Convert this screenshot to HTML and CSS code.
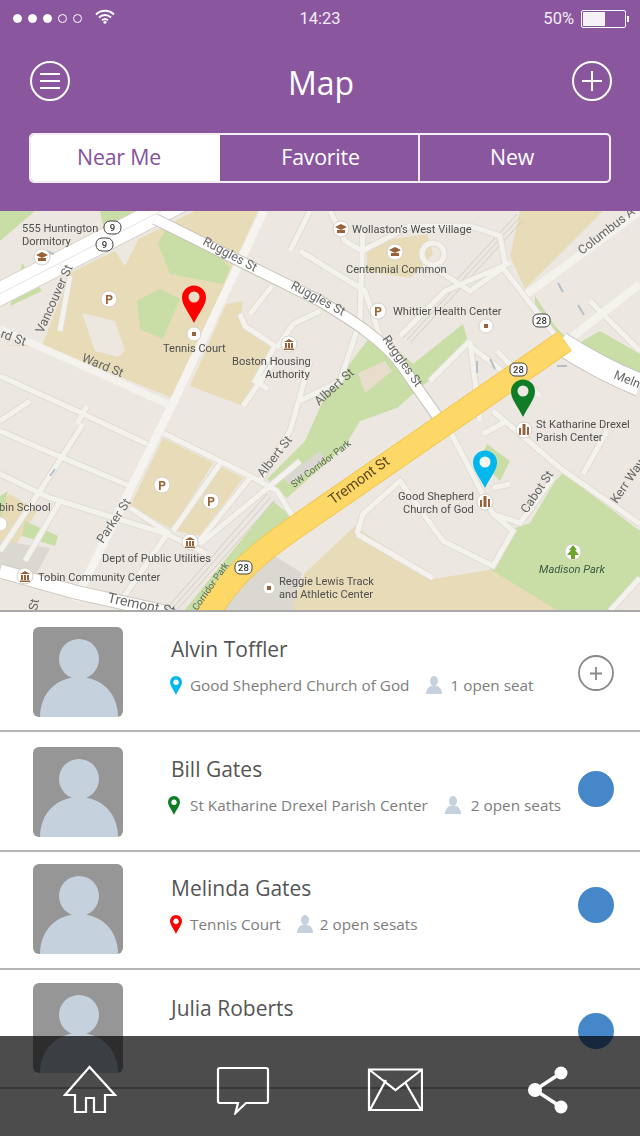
FILE: index.html
```html
<!DOCTYPE html>
<html lang="en">
<head>
<meta charset="utf-8">
<title>Map</title>
<link rel="stylesheet" href="styles.css">
</head>
<body>
<div class="phone">
  <header class="top">
    <div class="status">
      <div class="signal"><i class="on"></i><i class="on"></i><i class="on"></i><i></i><i></i>
        <svg class="wifi" viewBox="0 0 20 15" width="20" height="15"><path d="M1 5.500C6 .5 14 .5 19 5.500M4 8.500C7.500 5 12.500 5 16 8.500M7 11.300C8.800 9.800 11.200 9.800 13 11.300"/><circle cx="10" cy="13.300" r="1.500"/></svg>
      </div>
      <div class="clock">14:23</div>
      <div class="power"><span>50%</span><div class="battery"><b></b></div><em></em></div>
    </div>
    <div class="titlebar">
      <button class="round"><svg viewBox="0 0 40 40" width="40" height="40"><circle cx="20" cy="20" r="19"/><path d="M10 13H30M10 20H30M10 27H30"/></svg></button>
      <h1>Map</h1>
      <button class="round"><svg viewBox="0 0 40 40" width="40" height="40"><circle cx="20" cy="20" r="19"/><path d="M20 10V30M10 20H30"/></svg></button>
    </div>
    <nav class="tabs">
      <a class="tab active">Near Me</a>
      <a class="tab">Favorite</a>
      <a class="tab">New</a>
    </nav>
  </header>

  <svg class="map" viewBox="0 210 640 401" width="640" height="401">
    <defs>
      <g id="streets" fill="none">
        <path d="M0 375L77 410L147 443M0 430L63 457L130 485M0 473L50 497L167 533L207 553M83 423L40 490M87 405L77 423M220 463L173 530M250 477L197 543M167 533L123 597"/>
        <path d="M163 432L250 475L277 490L297 522M130 507L170 533M40 490L0 550M60 500L25 560"/>
        <path d="M357 533L363 513L400 480L443 540L493 565L513 530L493 513L450 430M493 410L560 467L640 523M583 473L607 430M483 433L507 420M493 487L510 483M493 513L520 522L553 477M357 533L433 577M610 610L640 577"/>
        <path d="M503 267L557 337M360 320L363 227M330 210L345 240L362 250M362 250L410 225L470 225L500 235L505 262M431 265L470 290L503 267M400 335L445 290L510 262M422 253a11 11 0 1 0 22 0a11 11 0 1 0 -22 0"/>
        <path d="M430 380L470 340M470 345L505 372M470 340L480 420M497 350L540 395M590 300L640 350"/>
        <path d="M240 313L245 325L275 345L255 380L268 388M272 285L250 313M320 310L293 323L277 347M243 405L275 360M300 400L340 380L360 320M260 480L290 430L310 360M310 210L290 250M300 250L365 290L380 335"/>
        <path d="M70 275L60 330M0 420L30 400M200 543L300 460"/>
      </g>
    </defs>

    <rect x="0" y="210" width="640" height="401" class="ground"/>
    <polygon class="tan" points="0,345 42,345 70,272 195,210 258,210 172,397 40,343"/>
    <polygon class="tan" points="190,385 226,303 243,300 240,322 272,345 243,405"/>
    <polygon class="tan" points="163,437 213,462 172,528 130,505"/>
    <polygon class="tan" points="220,465 243,477 200,535 177,530"/>
    <polygon class="tan" points="520,210 603,210 525,288 510,255"/>
    <polygon class="tan" points="367,242 427,233 433,253 410,277 367,270"/>
    <polygon class="tan" points="355,525 433,578 495,568 560,611 290,611 305,572"/>
    <polygon class="tan" points="10,493 37,510 15,545 0,540 0,500"/>
    <polygon class="gray" points="258,560 205,611 292,611 302,572 270,552"/>
    <polygon class="gray" points="0,540 50,547 37,572 0,568"/>
    <polygon class="pale" points="82,312 115,320 125,350 118,356 95,350"/>
    <polygon class="pale" points="115,214 145,225 125,265 115,250"/>

    <polygon class="green" points="0,210 35,210 0,240"/>
    <polygon class="green" points="100,210 135,210 105,235"/>
    <polygon class="green" points="158,243 170,220 205,240 230,267 223,283 170,273"/>
    <polygon class="green" points="137,300 160,288 180,298 163,338 140,328"/>
    <polygon class="green" points="22,262 42,290 10,305 18,280"/>
    <polygon class="green" points="367,340 383,337 413,363 463,323 467,337 453,360 420,387 397,407 360,420 345,445 287,497 267,478 305,440 325,395"/>
    <polygon class="green" points="183,611 230,553 273,500 293,517 253,550 200,611"/>
    <polygon class="green" points="577,343 600,330 640,353 640,372 620,367"/>
    <polygon class="green" points="535,295 555,325 565,335 560,340 535,310"/>
    <polygon class="green" points="487,443 510,460 500,480 480,460"/>
    <polygon class="green" points="490,568 515,527 530,522 555,480 563,472 640,530 640,580 610,611 560,611"/>
    <polygon class="green" points="25,520 58,535 55,545 22,535"/>
    <polygon class="green" points="0,495 8,490 0,520"/>
    <polygon class="clay" points="358,372 385,360 392,370 365,392"/>
    <polygon class="gray" points="283,477 320,450 325,458 290,484"/>

    <g class="rail">
      <path d="M403 337L517 213M407 339L520 216M411 341L523 219M167 607L267 493M171 609L271 496M175 611L275 499"/>
    </g>

    <use href="#streets" class="casing"/>
    <use href="#streets" class="street"/>

    <path class="main casing-main" d="M-20 303L200 190"/>
    <path class="main" d="M-20 303L200 190"/>
    <path class="main-mid" d="M-20 303L200 190"/>
    <path class="parker" d="M264 210L170 408L75 600"/>
    <path class="ward" d="M0 328L172 405"/>
    <path class="columbus" d="M527 293L640 210M567 340L640 283"/>
    <path class="ruggles-case" d="M155 218L320 300C350 318 385 340 402 365L442 422"/>
    <path class="ruggles" d="M155 218L320 300C350 318 385 340 402 365L442 422"/>
    <path class="tremont-w-case" d="M0 570L75 591L165 611"/>
    <path class="tremont-w" d="M0 570L75 591L165 611"/>
    <path class="melnea-case" d="M560 342C585 358 610 372 640 384"/>
    <path class="melnea" d="M560 342C585 358 610 372 640 384"/>
    <path class="yellow-case" d="M205 620C222 585 250 558 290 530L565 340"/>
    <path class="yellow" d="M205 620C222 585 250 558 290 530L565 340"/>

    <g class="arrows">
      <path d="M558 282L563 291M578 304L584 314M477 360L477 372M490 358L495 368M557 365H567M54 253L44 249M50 475L55 468"/>
    </g>

    <g class="poi">
      <circle cx="42" cy="256" r="8"/><circle cx="109" cy="298" r="8"/><circle cx="194" cy="333" r="7"/><circle cx="289" cy="343" r="8"/>
      <circle cx="341" cy="228" r="8"/><circle cx="395" cy="251" r="8"/><circle cx="378" cy="310" r="8"/><circle cx="486" cy="325" r="7"/>
      <circle cx="524" cy="429" r="8"/><circle cx="485" cy="501" r="8"/><circle cx="573" cy="551" r="8"/>
      <circle cx="162" cy="484" r="8"/><circle cx="211" cy="500" r="8"/><circle cx="190" cy="541" r="8"/><circle cx="25" cy="575" r="8"/><circle cx="269" cy="587" r="6"/><circle cx="0" cy="523" r="7"/>
    </g>
    <g class="glyph">
      <text x="109" y="302.500">P</text><text x="378" y="314.500">P</text><text x="162" y="488.500">P</text><text x="211" y="504.500">P</text>
    </g>
    <g class="brown">
      <rect x="192" y="331" width="4" height="4"/><rect x="484" y="323" width="4" height="4"/><rect x="267" y="585" width="4" height="4"/>
      <path d="M36 254L42 251L48 254L42 257ZM38 257H46V260H38ZM335 226L341 223L347 226L341 229ZM337 229H345V232H337ZM389 249L395 246L401 249L395 252ZM391 252H399V255H391Z"/>
      <path d="M284 341L289 338L294 341ZM285 342H287V347H285ZM288 342H290V347H288ZM291 342H293V347H291ZM284 347.500H294V349H284ZM185 539L190 536L195 539ZM186 540H188V545H186ZM189 540H191V545H189ZM192 540H194V545H192ZM185 545.500H195V547H185ZM20 573L25 570L30 573ZM21 574H23V579H21ZM24 574H26V579H24ZM27 574H29V579H27ZM20 579.500H30V581H20Z"/>
      <path d="M519 427H521V434H519ZM522.500 423H525.500V434H522.500ZM527 426H529V434H527ZM480 499H482V506H480ZM483.500 495H486.500V506H483.500ZM488 498H490V506H488Z"/>
    </g>
    <path class="tree" d="M573 544L577 549H575L579 554H575V558H571V554H567L571 549H569Z"/>

    <g class="shield">
      <rect x="104" y="220" width="17" height="13" rx="6"/><rect x="96" y="237" width="17" height="13" rx="6"/>
      <rect x="533" y="313" width="17" height="13" rx="5"/><rect x="510" y="362" width="17" height="13" rx="5"/><rect x="235" y="560" width="17" height="13" rx="5"/>
    </g>
    <g class="shield-t">
      <text x="112.500" y="230">9</text><text x="104.500" y="247">9</text><text x="541.500" y="323">28</text><text x="518.500" y="372">28</text><text x="243.500" y="570">28</text>
    </g>

    <g class="lbl">
      <text x="22" y="231">555 Huntington</text><text x="22" y="244">Dormitory</text>
      <text x="163" y="351">Tennis Court</text>
      <text x="232" y="364">Boston Housing</text><text x="265" y="377">Authority</text>
      <text x="352" y="232">Wollaston's West Village</text>
      <text x="346" y="272">Centennial Common</text>
      <text x="393" y="314">Whittier Health Center</text>
      <text x="536" y="427">St Katharine Drexel</text><text x="536" y="440">Parish Center</text>
      <text x="398" y="499">Good Shepherd</text><text x="403" y="512">Church of God</text>
      <text x="-1" y="510">bin School</text>
      <text x="102" y="561">Dept of Public Utilities</text>
      <text x="38" y="580">Tobin Community Center</text>
      <text x="279" y="584">Reggie Lewis Track</text><text x="279" y="597">and Athletic Center</text>
      <text class="park" x="539" y="572">Madison Park</text>
    </g>
    <g class="road">
      <text transform="translate(43 333) rotate(-66)">Vancouver St</text>
      <text transform="translate(202 243) rotate(28)">Ruggles St</text>
      <text transform="translate(290 287) rotate(28)">Ruggles St</text>
      <text transform="translate(382 338) rotate(55)">Ruggles St</text>
      <text transform="translate(81 360) rotate(22)">Ward St</text>
      <text transform="translate(0 336) rotate(20)">rd St</text>
      <text transform="translate(582 254) rotate(-38)">Columbus A</text>
      <text transform="translate(613 377) rotate(22)">Melne</text>
      <text transform="translate(319 405) rotate(-42)">Albert St</text>
      <text transform="translate(263 477) rotate(-52)">Albert St</text>
      <text class="tr" transform="translate(333 504) rotate(-36)">Tremont St</text>
      <text class="small" transform="translate(294 487) rotate(-37)">SW Corridor Park</text>
      <text class="small" transform="translate(197 610) rotate(-55)">Corridor Park</text>
      <text transform="translate(103 543) rotate(-56)">Parker St</text>
      <text class="tr2" transform="translate(107 601) rotate(12)">Tremont St</text>
      <text transform="translate(37 610) rotate(-80)">St</text>
      <text transform="translate(527 513) rotate(-56)">Cabot St</text>
      <text transform="translate(617 503) rotate(-56)">Kerr Way</text>
    </g>

    <g class="pin-red"><path d="M194 322C188 310 182 304 182 296.500A12 12 0 0 1 206 296.500C206 304 200 310 194 322Z"/><circle cx="194" cy="296" r="5.500"/></g>
    <g class="pin-green"><path d="M523 416C517 404 511 398 511 390.500A12 12 0 0 1 535 390.500C535 398 529 404 523 416Z"/><circle cx="523" cy="390" r="5.500"/></g>
    <g class="pin-blue"><path d="M485 487C479 475 473 469 473 461.500A12 12 0 0 1 497 461.500C497 469 491 475 485 487Z"/><circle cx="485" cy="461" r="5.500"/></g>
  </svg>

  <section class="list">
    <article class="row row-a">
      <svg class="avatar" viewBox="0 0 90 90" width="90" height="90"><rect width="90" height="90" rx="6" class="av-bg"/><ellipse cx="46" cy="32" rx="20" ry="20" class="av-fg"/><path class="av-fg" d="M7 90C7 66 24 50 46 50S85 66 85 90Z"/></svg>
      <div class="info">
        <h2>Alvin Toffler</h2>
        <p class="meta">
          <svg class="mini" viewBox="0 0 12 19" width="12" height="19"><path class="fill-blue" fill-rule="evenodd" d="M6 19C4 14 0 10 0 6A6 6 0 0 1 12 6C12 10 8 14 6 19ZM6 3.500A2.800 2.800 0 1 0 6.010 3.500Z"/></svg>
          <span>Good Shepherd Church of God</span>
          <svg class="person" viewBox="0 0 16 18" width="16" height="18"><ellipse cx="8" cy="5" rx="4" ry="5"/><path d="M0 18C0 12 4 9.500 8 9.500S16 12 16 18Z"/></svg>
          <span>1 open seat</span>
        </p>
      </div>
      <button class="add"><svg viewBox="0 0 36 36" width="36" height="36"><circle cx="18" cy="18" r="17"/><path d="M18 12V25M12 18.500H24"/></svg></button>
    </article>
    <article class="row row-b">
      <svg class="avatar" viewBox="0 0 90 90" width="90" height="90"><rect width="90" height="90" rx="6" class="av-bg"/><ellipse cx="46" cy="32" rx="20" ry="20" class="av-fg"/><path class="av-fg" d="M7 90C7 66 24 50 46 50S85 66 85 90Z"/></svg>
      <div class="info">
        <h2>Bill Gates</h2>
        <p class="meta">
          <svg class="mini mini-b" viewBox="0 0 12 19" width="12" height="19"><path class="fill-green" fill-rule="evenodd" d="M6 19C4 14 0 10 0 6A6 6 0 0 1 12 6C12 10 8 14 6 19ZM6 3.500A2.800 2.800 0 1 0 6.010 3.500Z"/></svg>
          <span>St Katharine Drexel Parish Center</span>
          <svg class="person" viewBox="0 0 16 18" width="16" height="18"><ellipse cx="8" cy="5" rx="4" ry="5"/><path d="M0 18C0 12 4 9.500 8 9.500S16 12 16 18Z"/></svg>
          <span>2 open seats</span>
        </p>
      </div>
      <span class="dot"></span>
    </article>
    <article class="row row-c">
      <svg class="avatar" viewBox="0 0 90 90" width="90" height="90"><rect width="90" height="90" rx="6" class="av-bg"/><ellipse cx="46" cy="32" rx="20" ry="20" class="av-fg"/><path class="av-fg" d="M7 90C7 66 24 50 46 50S85 66 85 90Z"/></svg>
      <div class="info">
        <h2>Melinda Gates</h2>
        <p class="meta">
          <svg class="mini" viewBox="0 0 12 19" width="12" height="19"><path class="fill-red" fill-rule="evenodd" d="M6 19C4 14 0 10 0 6A6 6 0 0 1 12 6C12 10 8 14 6 19ZM6 3.500A2.800 2.800 0 1 0 6.010 3.500Z"/></svg>
          <span>Tennis Court</span>
          <svg class="person" viewBox="0 0 16 18" width="16" height="18"><ellipse cx="8" cy="5" rx="4" ry="5"/><path d="M0 18C0 12 4 9.500 8 9.500S16 12 16 18Z"/></svg>
          <span>2 open sesats</span>
        </p>
      </div>
      <span class="dot"></span>
    </article>
    <article class="row row-d">
      <svg class="avatar" viewBox="0 0 90 90" width="90" height="90"><rect width="90" height="90" rx="6" class="av-bg"/><ellipse cx="46" cy="32" rx="20" ry="20" class="av-fg"/><path class="av-fg" d="M7 90C7 66 24 50 46 50S85 66 85 90Z"/></svg>
      <div class="info">
        <h2>Julia Roberts</h2>
      </div>
      <span class="dot"></span>
    </article>
  </section>

  <footer class="dock">
    <svg class="home" viewBox="0 0 54 50" width="54" height="50"><path d="M26.500 2L2 30H12V47H23V33H31V47H42V30H52Z"/></svg>
    <svg class="chat" viewBox="0 0 54 50" width="54" height="50"><path d="M4 3H50Q52 3 52 5V36Q52 38 50 38H30L19.500 48L22 38H4Q2 38 2 36V5Q2 3 4 3Z"/></svg>
    <svg class="mail" viewBox="0 0 56 46" width="56" height="46"><path d="M2 2.500H55V43H2ZM2 2.500L28.500 23L55 2.500M3.500 42L19 13M53.500 42L38 15"/></svg>
    <svg class="share" viewBox="0 0 44 50" width="44" height="50"><path d="M34 8L8 25L34 42"/><circle cx="34" cy="8" r="6.500"/><circle cx="8" cy="25" r="7"/><circle cx="34" cy="42" r="6.500"/></svg>
  </footer>
</div>
</body>
</html>
```
FILE: styles.css
```css
* { box-sizing: border-box; margin: 0; padding: 0; }
html, body { width: 640px; height: 1136px; overflow: hidden; background: #fff; }
body { font-family: "Open Sans", "Liberation Sans", sans-serif; }
.phone { position: relative; width: 640px; height: 1136px; overflow: hidden; display: flex; flex-direction: column; }

.top { height: 211px; background: #8a579f; color: #fff; padding: 0 29px; flex: none; }
.status { height: 37px; margin: 0 -29px; padding: 0 11px 0 13px; display: flex; align-items: center; font-family: Roboto, sans-serif; font-size: 16.500px; color: #f3ecf5; }
.signal, .power { flex: 1 1 0; display: flex; align-items: center; }
.signal { gap: 6px; }
.signal i { width: 9px; height: 9px; border-radius: 50%; border: 1px solid #fff; flex: none; }
.signal i.on { background: #fff; }
.wifi { margin: -4px 0 0 7px; flex: none; }
.wifi path { fill: none; stroke: #fff; stroke-width: 2; }
.wifi circle { fill: #fff; }
.clock { flex: none; text-align: center; margin-right: 2px; }
.power { justify-content: flex-end; }
.power span { margin-right: 7px; }
.battery { width: 45px; height: 18px; border: 1px solid #fff; border-radius: 2px; padding: 1px; flex: none; }
.battery b { display: block; width: 22px; height: 100%; background: #f5f2f6; }
.power em { width: 2px; height: 6px; background: #fff; margin-left: 1px; flex: none; }

.titlebar { height: 88px; display: flex; align-items: center; justify-content: space-between; padding: 0 0 0 1px; margin-right: -1px; }
.titlebar h1 { font-weight: 400; font-size: 32px; line-height: 40px; margin-top: 4px; }
.round { width: 40px; height: 40px; background: none; border: 0; display: block; }
.round svg { display: block; fill: none; stroke: #fff; stroke-width: 2; }

.tabs { width: 582px; height: 50px; margin-top: 8px; display: flex; border: 2px solid #f4eff6; border-radius: 5px; overflow: hidden; }
.tab { flex: 1 1 0; display: flex; align-items: center; justify-content: center; font-size: 21.300px; color: #fff; letter-spacing: -.2px; padding: 0 5px 3px 0; }
.tab + .tab { border-left: 2px solid #f4eff6; }
.tab.active { flex: none; width: 189px; background: #fff; color: #84539b; padding-right: 13px; }
.tab:nth-child(2) { flex: none; width: 198px; border-left: 0; padding-right: 0; padding-left: 3px; }

.map { display: block; flex: none; filter: blur(.3px); }
.ground { fill: #ece8e1; }
.tan { fill: #e7dbb8; }
.green { fill: #c9dea6; }
.gray { fill: #dbd7d1; }
.pale { fill: #ece8e0; }
.clay { fill: #e8dccb; }
.rail path { fill: none; stroke: #d0cdc7; stroke-width: 1; }
.casing { stroke: #e1ddd5; stroke-width: 7; fill: none; }
.street { stroke: #f4f2ed; stroke-width: 5; fill: none; }
.main { fill: none; stroke: #fff; stroke-width: 22; }
.casing-main { stroke: #d8d4cc; stroke-width: 24; }
.main-mid { fill: none; stroke: #e6e3dd; stroke-width: 1; }
.parker { fill: none; stroke: #f6f4f0; stroke-width: 8; }
.ward { fill: none; stroke: #f4f2ed; stroke-width: 7; }
.columbus { fill: none; stroke: #f4f2ed; stroke-width: 8; }
.ruggles { fill: none; stroke: #fff; stroke-width: 10; }
.ruggles-case { fill: none; stroke: #c6c3bc; stroke-width: 12; }
.tremont-w { fill: none; stroke: #fff; stroke-width: 13; }
.tremont-w-case { fill: none; stroke: #cfcbc4; stroke-width: 15; }
.melnea { fill: none; stroke: #fff; stroke-width: 22; }
.melnea-case { fill: none; stroke: #c6c3bc; stroke-width: 24; }
.yellow { fill: none; stroke: #fdd866; stroke-width: 22; }
.yellow-case { fill: none; stroke: #f3c755; stroke-width: 24; }
.arrows path { fill: none; stroke: #b4c0cb; stroke-width: 2; }
.poi circle { fill: #fff; stroke: #d6d2ca; stroke-width: 1; }
.glyph text { font: 700 12px Roboto, sans-serif; fill: #9c6538; text-anchor: middle; }
.brown { fill: #98623a; }
.tree { fill: #6ea52d; }
.shield rect { fill: #fff; stroke: #444; stroke-width: 1; }
.shield-t text { font: 500 9.500px Roboto, sans-serif; fill: #333; text-anchor: middle; }
.lbl text { font: 400 11.100px Roboto, sans-serif; fill: #4f4f4f; }
.lbl .park { font-style: italic; fill: #3d5a41; }
.road text { font: 400 12.500px Roboto, sans-serif; fill: #666; }
.road .tr { font-size: 14.500px; fill: #5a4720; }
.road .tr2 { font-size: 14px; }
.road .small { font-size: 9.500px; fill: #5a6b50; }
.pin-red path { fill: #fe0000; }
.pin-green path { fill: #0e7d26; }
.pin-blue path { fill: #00b7ee; }
.pin-red circle { fill: #eadfc6; }
.pin-green circle { fill: #ece9e2; }
.pin-blue circle { fill: #f4f4f0; }

.list { flex: 1; background: #fff; border-top: 2px solid #a9a9a9; margin-top: -2px; position: relative; }
.row { --pad: 15px; --top: 7px; --ctl: 28px; display: flex; align-items: flex-start; padding: var(--pad) 0 0 33px; border-bottom: 2px solid #b5b5b5; position: relative; }
.row-a { height: 120px; }
.row-b { height: 120px; --ctl: 24px; }
.row-c { height: 118px; --pad: 12px; --top: 9px; --ctl: 23px; }
.row-d { height: 119px; --pad: 13px; --top: 10px; --ctl: 30px; }
.avatar { display: block; flex: none; }
.av-bg { fill: #969696; }
.av-fg { fill: #c6d1de; }
.info { flex: 1; padding-left: 48px; min-width: 0; }
.info h2 { font-weight: 400; font-size: 21px; line-height: 30px; color: #555; margin-top: var(--top); }
.meta { display: flex; align-items: center; margin-top: 8px; height: 26px; font-size: 15.300px; color: #7d7d7d; white-space: nowrap; margin-left: -1px; }
.mini { flex: none; margin-right: 8px; }
.mini-b { margin-left: -2px; margin-right: 10px; }
.fill-blue { fill: #00b7ee; }
.fill-green { fill: #0e7d26; }
.fill-red { fill: #fe0000; }
.person { flex: none; fill: #c6d1de; margin: 0 7px 0 16px; }
.row-a .person { margin: 0 8px 0 17px; }
.row-b .person { margin: 0 10px 0 17px; }
.add, .dot { flex: none; width: 36px; height: 36px; margin: var(--ctl) 26px 0 0; }
.add { background: none; border: 0; }
.add svg { display: block; fill: none; stroke: #8a8a8a; stroke-width: 1.800; }
.dot { border-radius: 50%; background: #4687c9; }

.dock { position: absolute; left: 0; right: 0; bottom: 0; height: 100px; background: rgba(0, 0, 0, .7); display: flex; align-items: flex-start; padding: 29px 0 0 63px; }
.dock svg { display: block; fill: none; stroke: #fff; stroke-width: 2.200; flex: none; }
.dock .chat { margin-left: 99px; }
.dock .mail { margin: 2px 0 0 97px; }
.dock .share { margin-left: 104px; stroke-width: 3.500; }
.share circle { fill: #fff; stroke: none; }
```
